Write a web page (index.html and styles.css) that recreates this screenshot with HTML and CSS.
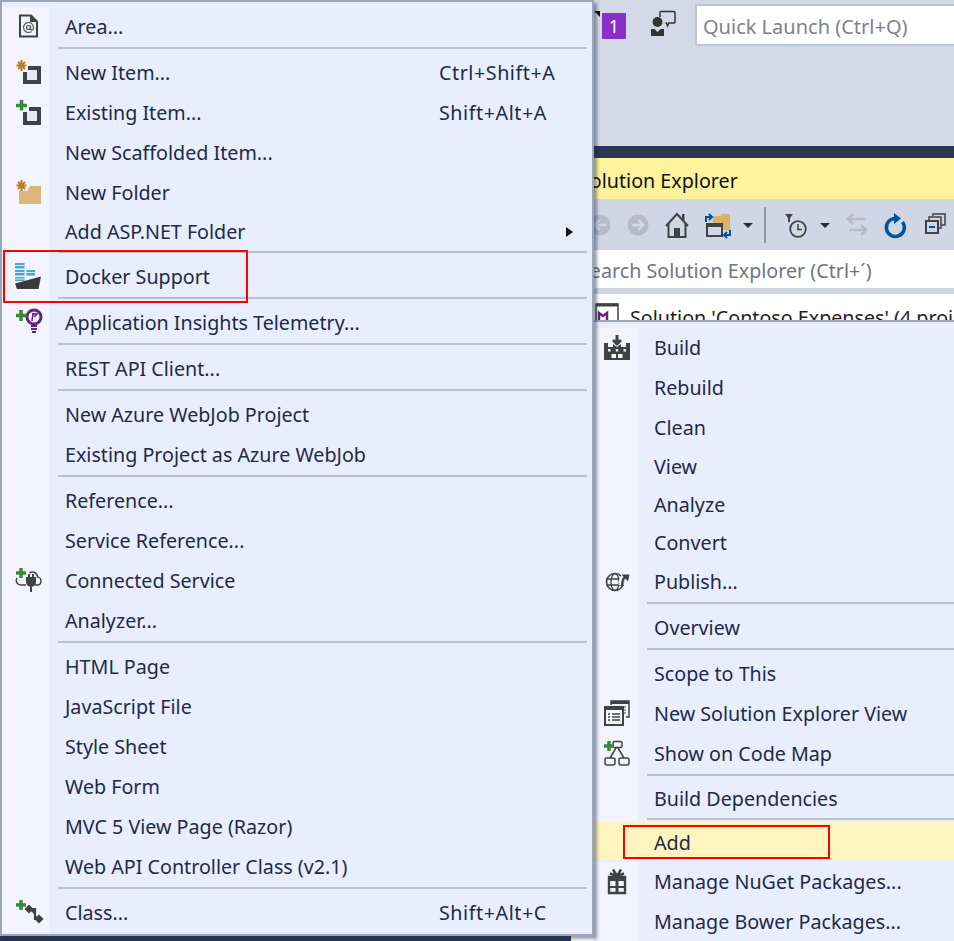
FILE: index.html
```html
<!DOCTYPE html>
<html lang="en">
<head>
<meta charset="utf-8">
<title>Add Docker Support</title>
<link rel="stylesheet" href="styles.css">
</head>
<body>
<div class="app">
  <header class="topbar">
    <span class="notify-corner"></span>
    <span class="badge">1</span>
    <svg class="feedback" width="28" height="28" viewBox="0 0 28 28"><circle cx="7.500" cy="12" r="5" fill="#333"/><path d="M1 26v-7h3.500l3 3 3-3H14v7z" fill="#333"/><path d="M10 7V2.500a1 1 0 0 1 1-1h13a1 1 0 0 1 1 1V12a1 1 0 0 1-1 1h-5l-1.500 3-1-3h-1" fill="none" stroke="#333" stroke-width="1.500"/></svg>
    <div class="quick">Quick Launch (Ctrl+Q)</div>
  </header>
  <section class="explorer">
    <div class="title">Solution Explorer</div>
    <div class="toolbar">
      <svg width="38" height="32" viewBox="0 0 38 32"><circle cx="19" cy="16" r="10.500" fill="#b6bbc7"/><path d="M25 16H14M18.500 11l-5 5 5 5" fill="none" stroke="#d0d7e6" stroke-width="2.500"/></svg>
      <svg width="39" height="32" viewBox="0 0 39 32"><circle cx="19" cy="16" r="10.500" fill="#b6bbc7"/><path d="M13 16h11M19.500 11l5 5-5 5" fill="none" stroke="#d0d7e6" stroke-width="2.500"/></svg>
      <svg width="39" height="32" viewBox="0 0 39 32"><path d="M8 17L19 5l11 12M10.500 15v13h17V15" fill="none" stroke="#424242" stroke-width="2"/><rect x="16" y="19" width="6" height="9" fill="#424242"/><rect x="24" y="5" width="2.500" height="7" fill="#424242"/></svg>
      <svg width="36" height="32" viewBox="0 0 36 32"><path d="M16 7h7l2-2h8v16H16z" fill="#dcb067"/><rect x="10" y="15" width="15" height="12" fill="#d0d7e6" stroke="#424242" stroke-width="2"/><rect x="9" y="14" width="17" height="4" fill="#424242"/><path d="M9 13V8h5M12 5l3 3-3 3" fill="none" stroke="#00539c" stroke-width="2"/><path d="M33 21v5h-5M30 23l-3 3 3 3" fill="none" stroke="#00539c" stroke-width="2"/></svg>
      <svg width="31" height="32" viewBox="0 0 31 32"><path d="M10 14h10l-5 5z" fill="#1f2d4d"/></svg>
      <span class="tb-sep"></span>
      <svg width="46" height="32" viewBox="0 0 46 32"><path d="M19 5h8l-3 4v4h-2V9z" fill="#424242"/><circle cx="32" cy="20" r="7.800" fill="none" stroke="#424242" stroke-width="1.800"/><path d="M32 15v5.500h4" fill="none" stroke="#424242" stroke-width="1.500"/></svg>
      <svg width="28" height="32" viewBox="0 0 28 32"><path d="M8 14h10l-5 5z" fill="#1f2d4d"/></svg>
      <svg width="34" height="32" viewBox="0 0 34 32"><path d="M25 10H8M13 5l-5 5 5 5M9 21h17M21 16l5 5-5 5" fill="none" stroke="#b6bbc7" stroke-width="2.500"/></svg>
      <svg width="41" height="32" viewBox="0 0 41 32"><path d="M22 9.500a9 9 0 1 0 6.500 3.500" fill="none" stroke="#00539c" stroke-width="3.500"/><path d="M20 4l7 5.500-7 5.500z" fill="#00539c"/></svg>
      <svg width="39" height="32" viewBox="0 0 39 32"><rect x="11" y="12" width="12" height="12" fill="none" stroke="#424242" stroke-width="2"/><path d="M14 11V8h12v11h-3M18 7V5h12v11h-4" fill="none" stroke="#424242" stroke-width="1.500"/><path d="M14 18h6" stroke="#00539c" stroke-width="2"/></svg>
    </div>
    <div class="search">Search Solution Explorer (Ctrl+´)</div>
    <div class="tree">
      <div class="tree-row">
        <svg width="24" height="24" viewBox="0 0 24 24"><rect x="1" y="1" width="22" height="22" fill="#fff" stroke="#424242" stroke-width="1.500"/><path d="M1 2h22" stroke="#424242" stroke-width="3"/><path d="M4 18V10l4 3 4-3v8" fill="none" stroke="#68217a" stroke-width="2.500"/></svg>
        <span>Solution 'Contoso Expenses' (4 projects)</span>
      </div>
    </div>
  </section>

  <nav class="menu menu-left">
    <div class="item">
      <span class="gutter"><svg class="ic" width="32" height="32" viewBox="0 0 32 32"><path d="M6 4.500h11l6 6V25.500H6z" fill="#f0f2fb" stroke="#424242" stroke-width="2"/><path d="M16 4v7h7" fill="#424242"/><circle cx="14.500" cy="16.500" r="2" fill="none" stroke="#555" stroke-width="1.200"/><path d="M16.500 14.500v3.500a1.500 1.500 0 0 0 3 -1.500a5 5 0 1 0-2 4" fill="none" stroke="#555" stroke-width="1.200"/></svg></span>
      <span class="label">Area...</span>
    </div>
    <div class="sep"></div>
    <div class="item">
      <span class="gutter"><svg class="ic" width="32" height="32" viewBox="0 0 32 32"><rect x="11" y="11" width="14" height="14" fill="#e4e8fa" stroke="#424242" stroke-width="4"/><rect x="1" y="1" width="13" height="14" fill="#f2f5ff"/><path d="M7.500 3v11M2.500 8.500h10M4 5l7 7M11 5l-7 7" stroke="#c27d1a" stroke-width="2"/></svg></span>
      <span class="label">New Item...</span><span class="shortcut">Ctrl+Shift+A</span>
    </div>
    <div class="item">
      <span class="gutter"><svg class="ic" width="32" height="32" viewBox="0 0 32 32"><rect x="11" y="12" width="14" height="14" fill="#e4e8fa" stroke="#424242" stroke-width="4"/><rect x="1" y="1" width="14" height="14" fill="#f2f5ff"/><path d="M7.500 3v10.500M2 8.500h11" stroke="#388a34" stroke-width="3.500"/></svg></span>
      <span class="label">Existing Item...</span><span class="shortcut">Shift+Alt+A</span>
    </div>
    <div class="item">
      <span class="gutter"></span>
      <span class="label">New Scaffolded Item...</span>
    </div>
    <div class="item">
      <span class="gutter"><svg class="ic" width="32" height="32" viewBox="0 0 32 32"><path d="M5 27V12h9l2-3h11v18z" fill="#dcb67a"/><rect x="1" y="1" width="13" height="14" fill="#f2f5ff" opacity=".8"/><path d="M5 15h9l2-2H27v1H5z" fill="#dcb67a"/><path d="M7.500 3v11M2.500 8.500h10M4 5l7 7M11 5l-7 7" stroke="#c27d1a" stroke-width="2"/></svg></span>
      <span class="label">New Folder</span>
    </div>
    <div class="item item-short">
      <span class="gutter"></span>
      <span class="label">Add ASP.NET Folder</span><span class="arrow"></span>
    </div>
    <div class="sep"></div>
    <div class="item">
      <span class="gutter"><svg class="ic" width="32" height="32" viewBox="0 0 32 32"><path d="M1 2h9.500v5.500H1zM1 9h9.500v5.500H1zM12.500 9H21v5.500h-8.500zM1 16h9.500v4H1z" fill="#4ba6cf"/><path d="M1 4.500h9.500M1 11.500h9.500M12.500 11.500H21M1 18h9.500" stroke="#d5eaf5"/><path d="M1 22.500L27 15.500l-2.500 12.500H3z" fill="#3a3a3a"/></svg></span>
      <span class="label">Docker Support</span>
    </div>
    <div class="sep"></div>
    <div class="item">
      <span class="gutter"><svg class="ic" width="32" height="32" viewBox="0 0 32 32"><circle cx="20" cy="10" r="7" fill="none" stroke="#68217a" stroke-width="3"/><path d="M19 6l-1 8M18 7h5l-3 3" fill="none" stroke="#68217a" stroke-width="1.500"/><path d="M17 19h6M17 22h6M18 25h4" stroke="#68217a" stroke-width="2"/><path d="M7 3v11M2 8.500h10.500" stroke="#388a34" stroke-width="3.500"/></svg></span>
      <span class="label">Application Insights Telemetry...</span>
    </div>
    <div class="sep"></div>
    <div class="item"><span class="gutter"></span><span class="label">REST API Client...</span></div>
    <div class="sep"></div>
    <div class="item"><span class="gutter"></span><span class="label">New Azure WebJob Project</span></div>
    <div class="item"><span class="gutter"></span><span class="label">Existing Project as Azure WebJob</span></div>
    <div class="sep"></div>
    <div class="item"><span class="gutter"></span><span class="label">Reference...</span></div>
    <div class="item"><span class="gutter"></span><span class="label">Service Reference...</span></div>
    <div class="item">
      <span class="gutter"><svg class="ic" width="32" height="32" viewBox="0 0 32 32"><path d="M3 13c-2 3 0 7 4 7h5M21 20h2c3 0 4-2 4-4s-1.500-4-3.500-4c0-3-2.500-5-5-5-1 0-2 .3-3 1" fill="none" stroke="#424242" stroke-width="1.500"/><path d="M13 13v4a4 4 0 0 0 8 0v-4zM15 9v4M19 9v4M17 21v6" fill="#424242" stroke="#424242" stroke-width="2"/><path d="M7 3v10M2 8h10" stroke="#388a34" stroke-width="3.500"/></svg></span>
      <span class="label">Connected Service</span>
    </div>
    <div class="item"><span class="gutter"></span><span class="label">Analyzer...</span></div>
    <div class="sep"></div>
    <div class="item"><span class="gutter"></span><span class="label">HTML Page</span></div>
    <div class="item"><span class="gutter"></span><span class="label">JavaScript File</span></div>
    <div class="item"><span class="gutter"></span><span class="label">Style Sheet</span></div>
    <div class="item"><span class="gutter"></span><span class="label">Web Form</span></div>
    <div class="item"><span class="gutter"></span><span class="label">MVC 5 View Page (Razor)</span></div>
    <div class="item"><span class="gutter"></span><span class="label">Web API Controller Class (v2.1)</span></div>
    <div class="sep"></div>
    <div class="item">
      <span class="gutter"><svg class="ic" width="32" height="32" viewBox="0 0 32 32"><path d="M12 12l3-3 3 3-3 3zM22 22l3-3 3 3-3 3zM15 12h6v10h4" fill="#424242" stroke="#424242" stroke-width="2.200"/><path d="M7 3v10M2 8h10" stroke="#388a34" stroke-width="3.500"/></svg></span>
      <span class="label">Class...</span><span class="shortcut">Shift+Alt+C</span>
    </div>
    <div class="callout callout-docker"></div>
  </nav>

  <nav class="menu menu-right">
    <div class="item">
      <span class="gutter"><svg class="ic" width="32" height="32" viewBox="0 0 32 32"><path d="M2 28V11h4v4h5v-3l4 3 4-3v3h5v-4h4v17z" fill="#424242"/><path d="M15 3v9M11 8l4 4 4-4" fill="none" stroke="#424242" stroke-width="3"/><path d="M6 17h2.500v2.500H6zM13.800 17h2.500v2.500h-2.500zM21.500 17H24v2.500h-2.500zM9.500 22h4.500v4H9.500zM16 22h4.500v4H16z" fill="#f2f5ff"/></svg></span>
      <span class="label">Build</span>
    </div>
    <div class="item"><span class="gutter"></span><span class="label">Rebuild</span></div>
    <div class="item"><span class="gutter"></span><span class="label">Clean</span></div>
    <div class="item item-short"><span class="gutter"></span><span class="label">View</span></div>
    <div class="item item-short"><span class="gutter"></span><span class="label">Analyze</span></div>
    <div class="item item-short"><span class="gutter"></span><span class="label">Convert</span></div>
    <div class="item">
      <span class="gutter"><svg class="ic" width="32" height="32" viewBox="0 0 32 32"><circle cx="13" cy="16" r="8.500" fill="none" stroke="#424242" stroke-width="1.600"/><ellipse cx="13" cy="16" rx="4" ry="8.500" fill="none" stroke="#424242" stroke-width="1.300"/><path d="M4.500 13h17M4.500 19h17" stroke="#424242" stroke-width="1.300"/><path d="M19 19c0-5 1-8 4-9" fill="none" stroke="#f2f5ff" stroke-width="5"/><path d="M20 20c0-5 1-8 4-10" fill="none" stroke="#424242" stroke-width="2.200"/><path d="M19.500 8.500h8l-1.500 7z" fill="#424242"/></svg></span>
      <span class="label">Publish...</span>
    </div>
    <div class="sep"></div>
    <div class="item"><span class="gutter"></span><span class="label">Overview</span></div>
    <div class="sep"></div>
    <div class="item"><span class="gutter"></span><span class="label">Scope to This</span></div>
    <div class="item">
      <span class="gutter"><svg class="ic" width="32" height="32" viewBox="0 0 32 32"><path d="M9 7V3h18v16h-3" fill="none" stroke="#424242" stroke-width="1.500"/><path d="M9 3h18v3H9z" fill="#424242"/><path d="M21 9h3M21 12h3M21 15h3" stroke="#424242"/><rect x="3" y="9" width="18" height="18" fill="#f2f5ff" stroke="#424242" stroke-width="2"/><rect x="3" y="9" width="18" height="3" fill="#424242"/><path d="M6 16h2M10 16h8M6 19h2M10 19h8M6 22h2M10 22h8" stroke="#424242" stroke-width="1.500"/></svg></span>
      <span class="label">New Solution Explorer View</span>
    </div>
    <div class="item">
      <span class="gutter"><svg class="ic" width="32" height="32" viewBox="0 0 32 32"><rect x="11" y="3.500" width="9" height="6" rx="1.500" fill="none" stroke="#424242" stroke-width="1.500"/><rect x="3" y="20" width="10" height="7" rx="2" fill="none" stroke="#424242" stroke-width="1.500"/><rect x="17" y="20" width="10" height="7" rx="2" fill="none" stroke="#424242" stroke-width="1.500"/><path d="M14 10l-6 10M16 10l6 10" stroke="#424242" stroke-width="1.500"/><path d="M7 3v10M2 8h10" stroke="#388a34" stroke-width="3.500"/></svg></span>
      <span class="label">Show on Code Map</span>
    </div>
    <div class="sep"></div>
    <div class="item item-short"><span class="gutter"></span><span class="label">Build Dependencies</span></div>
    <div class="sep sep-tight"></div>
    <div class="item item-short item-active"><span class="gutter"></span><span class="label">Add</span></div>
    <div class="item item-gap">
      <span class="gutter"><svg class="ic" width="32" height="32" viewBox="0 0 32 32"><path d="M7 11h16v16H7z" fill="none" stroke="#424242" stroke-width="2.400"/><path d="M6 10h18v5H6zM13.500 10h3v17h-3zM7 20h16v2H7z" fill="#424242"/><path d="M15 10L11 3.500M15 10l4-6.500M15 10L8 7.500M15 10l7-2.500" stroke="#424242" stroke-width="2.400"/></svg></span>
      <span class="label">Manage NuGet Packages...</span>
    </div>
    <div class="item"><span class="gutter"></span><span class="label">Manage Bower Packages...</span></div>
    <div class="callout callout-add"></div>
  </nav>
</div>
</body>
</html>
```
FILE: styles.css
```css
* { box-sizing: border-box; }
html, body { margin: 0; padding: 0; }
body { width: 954px; height: 941px; overflow: hidden; background: #293755; }
.app {
  position: relative;
  width: 954px;
  height: 941px;
  overflow: hidden;
  font-family: "Noto Sans", "Open Sans", sans-serif;
  font-size: 19.7px;
  color: #1e2a48;
  background: #293755;
}

.topbar {
  display: flex;
  align-items: flex-start;
  height: 146px;
  padding: 4px 0 0 594px;
  background: #d3d9e6;
}
.notify-corner {
  width: 0; height: 0;
  margin-top: 7px;
  border-top: 6px solid #111;
  border-left: 6px solid transparent;
}
.badge {
  width: 24px;
  height: 26px;
  margin: 9px 0 0 2px;
  border-radius: 1px;
  background: #8a2fc7;
  color: #fff;
  text-align: center;
  line-height: 26px;
  font-size: 18px;
}
.feedback { margin: 6px 17px 0 24px; flex: none; }
.quick {
  flex: 1;
  height: 42px;
  margin-right: -10px;
  padding-left: 6px;
  border: 2px solid #bcc5d6;
  background: #fff;
  color: #7c8190;
  font-size: 20px;
  line-height: 42px;
}

.explorer {
  display: flex;
  flex-direction: column;
  height: 785px;
  margin: 12px 0 0 571px;
  background: #fff;
}
.title {
  height: 41px;
  padding-left: 8px;
  background: #fff29d;
  color: #111;
  line-height: 45px;
}
.toolbar {
  display: flex;
  align-items: center;
  flex: none;
  height: 51px;
  padding-left: 10px;
  background: #cfd6e5;
}
.toolbar svg { flex: none; }
.tb-sep { width: 2px; height: 36px; margin-left: 0; background: #8d96a8; flex: none; }
.search {
  height: 44px;
  padding-left: 8px;
  border-bottom: 6px solid #cfd6e5;
  background: #fff;
  color: #6f7484;
  line-height: 42px;
  white-space: nowrap;
  flex: none;
}
.tree { flex: 1; padding: 9px 0 0 24px; }
.tree-row { display: flex; gap: 11px; align-items: flex-start; color: #1e1e1e; white-space: nowrap; }
.tree-row svg { flex: none; }
.tree-row span { line-height: 30px; }

.menu {
  position: absolute;
  background: #e9eefe;
  border: 2px solid #9aa6bb;
  box-shadow: 3px 3px 3px rgba(30, 40, 60, .45);
}
.menu-left {
  left: 0; top: 0;
  width: 594px;
  height: 936px;
  padding-top: 5px;
  z-index: 2;
}
.menu-right {
  left: 594px; top: 320px;
  width: 420px;
  height: 640px;
  padding-top: 6px;
  border-right: 0;
  border-left: 0;
  background: #e9eefe;
  z-index: 1;
}
.item {
  position: relative;
  display: flex;
  align-items: center;
  height: 40px;
  white-space: nowrap;
}
.item-short { height: 38px; }
.item-gap { margin-top: 2px; }
.item-active { background: #fdf4bf; }
.item-active .gutter { background: transparent; }
.gutter {
  align-self: stretch;
  display: flex;
  align-items: center;
  flex: none;
  width: 47px;
  padding-left: 12px;
  background: #f2f5ff;
}
.menu-right .gutter { width: 44px; padding-left: 8px; }
.label { flex: 1; padding: 0 0 2px 16px; }
.item-active .label { padding: 2px 0 0 16px; }
.shortcut { width: 153px; flex: none; padding-bottom: 2px; letter-spacing: .55px; }
.arrow {
  width: 0; height: 0;
  margin-right: 19px;
  border-left: 7px solid #111;
  border-top: 5px solid transparent;
  border-bottom: 5px solid transparent;
}
.sep {
  display: flex;
  height: 6px;
  padding-left: 56px;
  padding-right: 5px;
  background: linear-gradient(to right, #f2f5ff 47px, transparent 47px);
}
.sep::after { content: ""; flex: 1; height: 2px; background: #bcc0cd; }
.sep-tight { height: 4px; }
.menu-right .sep { padding-left: 53px; padding-right: 0; background: linear-gradient(to right, #f2f5ff 44px, transparent 44px); }
.ic { flex: none; }
.callout { position: absolute; border: 2px solid #f00; }
.callout-docker { left: 1px; top: 248px; width: 245px; height: 53px; }
.callout-add { left: 29px; top: 503px; width: 207px; height: 34px; }
```
